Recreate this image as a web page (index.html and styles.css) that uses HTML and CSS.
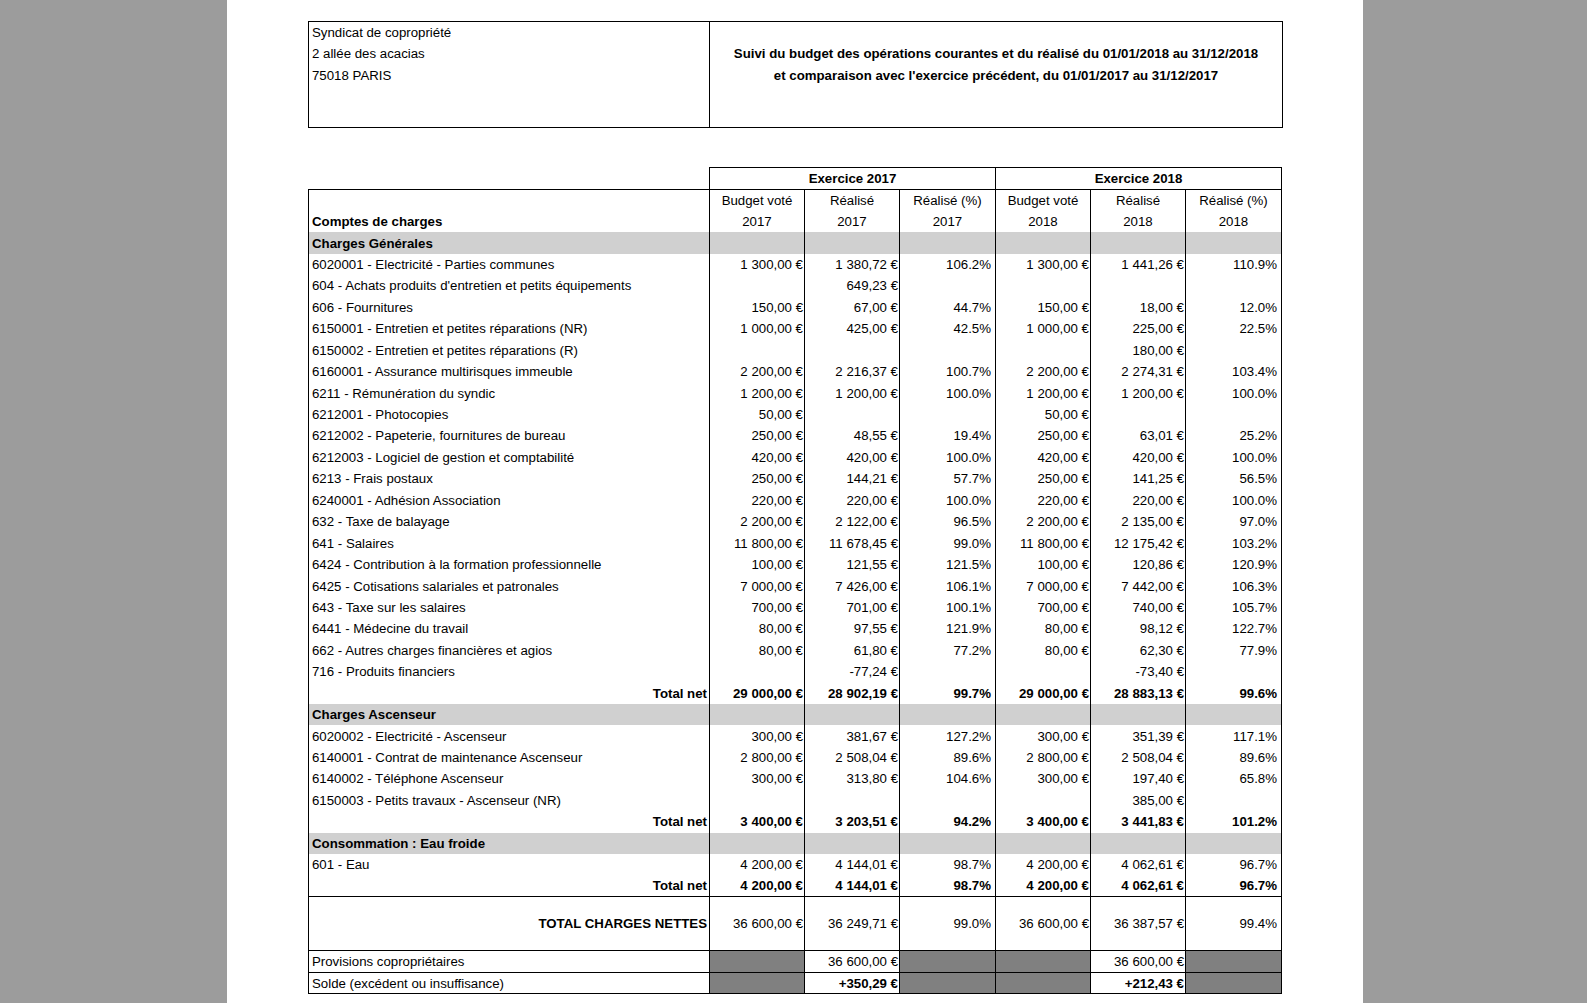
FILE: index.html
```html
<!DOCTYPE html>
<html lang="fr">
<head>
<meta charset="utf-8">
<title>Suivi du budget</title>
<link rel="stylesheet" href="styles.css">
</head>
<body>
<div class="page">
  <table class="head-box">
    <colgroup><col class="c-label"><col class="c-rest"></colgroup>
    <tr><td class="txt">Syndicat de copropriété</td><td class="divider"></td></tr>
    <tr><td class="txt">2 allée des acacias</td><td class="divider title">Suivi du budget des opérations courantes et du réalisé du 01/01/2018 au 31/12/2018</td></tr>
    <tr><td class="txt">75018 PARIS</td><td class="divider title">et comparaison avec l'exercice précédent, du 01/01/2017 au 31/12/2017</td></tr>
    <tr><td class="txt"></td><td class="divider"></td></tr>
    <tr><td class="txt"></td><td class="divider"></td></tr>
  </table>

  <table class="budget">
    <colgroup>
      <col class="c-label">
      <col class="c-95"><col class="c-95"><col class="c-96">
      <col class="c-95"><col class="c-95"><col class="c-96">
    </colgroup>
    <thead>
      <tr class="ex-row">
        <th class="blank"></th>
        <th colspan="3" class="ex">Exercice 2017</th>
        <th colspan="3" class="ex">Exercice 2018</th>
      </tr>
      <tr class="sub1">
        <th rowspan="2" class="comptes">Comptes de charges</th>
        <th>Budget voté</th><th>Réalisé</th><th>Réalisé (%)</th>
        <th>Budget voté</th><th>Réalisé</th><th>Réalisé (%)</th>
      </tr>
      <tr class="sub2">
        <th>2017</th><th>2017</th><th>2017</th>
        <th>2018</th><th>2018</th><th>2018</th>
      </tr>
    </thead>
    <tbody>
      <tr class="section"><td>Charges Générales</td><td></td><td></td><td></td><td></td><td></td><td></td></tr>
      <tr><td>6020001 - Electricité - Parties communes</td><td class="amt">1 300,00 €</td><td class="amt">1 380,72 €</td><td class="pct">106.2%</td><td class="amt">1 300,00 €</td><td class="amt">1 441,26 €</td><td class="pct">110.9%</td></tr>
      <tr><td>604 - Achats produits d'entretien et petits équipements</td><td class="amt"></td><td class="amt">649,23 €</td><td class="pct"></td><td class="amt"></td><td class="amt"></td><td class="pct"></td></tr>
      <tr><td>606 - Fournitures</td><td class="amt">150,00 €</td><td class="amt">67,00 €</td><td class="pct">44.7%</td><td class="amt">150,00 €</td><td class="amt">18,00 €</td><td class="pct">12.0%</td></tr>
      <tr><td>6150001 - Entretien et petites réparations (NR)</td><td class="amt">1 000,00 €</td><td class="amt">425,00 €</td><td class="pct">42.5%</td><td class="amt">1 000,00 €</td><td class="amt">225,00 €</td><td class="pct">22.5%</td></tr>
      <tr><td>6150002 - Entretien et petites réparations (R)</td><td class="amt"></td><td class="amt"></td><td class="pct"></td><td class="amt"></td><td class="amt">180,00 €</td><td class="pct"></td></tr>
      <tr><td>6160001 - Assurance multirisques immeuble</td><td class="amt">2 200,00 €</td><td class="amt">2 216,37 €</td><td class="pct">100.7%</td><td class="amt">2 200,00 €</td><td class="amt">2 274,31 €</td><td class="pct">103.4%</td></tr>
      <tr><td>6211 - Rémunération du syndic</td><td class="amt">1 200,00 €</td><td class="amt">1 200,00 €</td><td class="pct">100.0%</td><td class="amt">1 200,00 €</td><td class="amt">1 200,00 €</td><td class="pct">100.0%</td></tr>
      <tr><td>6212001 - Photocopies</td><td class="amt">50,00 €</td><td class="amt"></td><td class="pct"></td><td class="amt">50,00 €</td><td class="amt"></td><td class="pct"></td></tr>
      <tr><td>6212002 - Papeterie, fournitures de bureau</td><td class="amt">250,00 €</td><td class="amt">48,55 €</td><td class="pct">19.4%</td><td class="amt">250,00 €</td><td class="amt">63,01 €</td><td class="pct">25.2%</td></tr>
      <tr><td>6212003 - Logiciel de gestion et comptabilité</td><td class="amt">420,00 €</td><td class="amt">420,00 €</td><td class="pct">100.0%</td><td class="amt">420,00 €</td><td class="amt">420,00 €</td><td class="pct">100.0%</td></tr>
      <tr><td>6213 - Frais postaux</td><td class="amt">250,00 €</td><td class="amt">144,21 €</td><td class="pct">57.7%</td><td class="amt">250,00 €</td><td class="amt">141,25 €</td><td class="pct">56.5%</td></tr>
      <tr><td>6240001 - Adhésion Association</td><td class="amt">220,00 €</td><td class="amt">220,00 €</td><td class="pct">100.0%</td><td class="amt">220,00 €</td><td class="amt">220,00 €</td><td class="pct">100.0%</td></tr>
      <tr><td>632 - Taxe de balayage</td><td class="amt">2 200,00 €</td><td class="amt">2 122,00 €</td><td class="pct">96.5%</td><td class="amt">2 200,00 €</td><td class="amt">2 135,00 €</td><td class="pct">97.0%</td></tr>
      <tr><td>641 - Salaires</td><td class="amt">11 800,00 €</td><td class="amt">11 678,45 €</td><td class="pct">99.0%</td><td class="amt">11 800,00 €</td><td class="amt">12 175,42 €</td><td class="pct">103.2%</td></tr>
      <tr><td>6424 - Contribution à la formation professionnelle</td><td class="amt">100,00 €</td><td class="amt">121,55 €</td><td class="pct">121.5%</td><td class="amt">100,00 €</td><td class="amt">120,86 €</td><td class="pct">120.9%</td></tr>
      <tr><td>6425 - Cotisations salariales et patronales</td><td class="amt">7 000,00 €</td><td class="amt">7 426,00 €</td><td class="pct">106.1%</td><td class="amt">7 000,00 €</td><td class="amt">7 442,00 €</td><td class="pct">106.3%</td></tr>
      <tr><td>643 - Taxe sur les salaires</td><td class="amt">700,00 €</td><td class="amt">701,00 €</td><td class="pct">100.1%</td><td class="amt">700,00 €</td><td class="amt">740,00 €</td><td class="pct">105.7%</td></tr>
      <tr><td>6441 - Médecine du travail</td><td class="amt">80,00 €</td><td class="amt">97,55 €</td><td class="pct">121.9%</td><td class="amt">80,00 €</td><td class="amt">98,12 €</td><td class="pct">122.7%</td></tr>
      <tr><td>662 - Autres charges financières et agios</td><td class="amt">80,00 €</td><td class="amt">61,80 €</td><td class="pct">77.2%</td><td class="amt">80,00 €</td><td class="amt">62,30 €</td><td class="pct">77.9%</td></tr>
      <tr><td>716 - Produits financiers</td><td class="amt"></td><td class="amt">-77,24 €</td><td class="pct"></td><td class="amt"></td><td class="amt">-73,40 €</td><td class="pct"></td></tr>
      <tr class="total"><td class="tlabel">Total net</td><td class="amt">29 000,00 €</td><td class="amt">28 902,19 €</td><td class="pct">99.7%</td><td class="amt">29 000,00 €</td><td class="amt">28 883,13 €</td><td class="pct">99.6%</td></tr>

      <tr class="section"><td>Charges Ascenseur</td><td></td><td></td><td></td><td></td><td></td><td></td></tr>
      <tr><td>6020002 - Electricité - Ascenseur</td><td class="amt">300,00 €</td><td class="amt">381,67 €</td><td class="pct">127.2%</td><td class="amt">300,00 €</td><td class="amt">351,39 €</td><td class="pct">117.1%</td></tr>
      <tr><td>6140001 - Contrat de maintenance Ascenseur</td><td class="amt">2 800,00 €</td><td class="amt">2 508,04 €</td><td class="pct">89.6%</td><td class="amt">2 800,00 €</td><td class="amt">2 508,04 €</td><td class="pct">89.6%</td></tr>
      <tr><td>6140002 - Téléphone Ascenseur</td><td class="amt">300,00 €</td><td class="amt">313,80 €</td><td class="pct">104.6%</td><td class="amt">300,00 €</td><td class="amt">197,40 €</td><td class="pct">65.8%</td></tr>
      <tr><td>6150003 - Petits travaux - Ascenseur (NR)</td><td class="amt"></td><td class="amt"></td><td class="pct"></td><td class="amt"></td><td class="amt">385,00 €</td><td class="pct"></td></tr>
      <tr class="total"><td class="tlabel">Total net</td><td class="amt">3 400,00 €</td><td class="amt">3 203,51 €</td><td class="pct">94.2%</td><td class="amt">3 400,00 €</td><td class="amt">3 441,83 €</td><td class="pct">101.2%</td></tr>

      <tr class="section"><td>Consommation : Eau froide</td><td></td><td></td><td></td><td></td><td></td><td></td></tr>
      <tr><td>601 - Eau</td><td class="amt">4 200,00 €</td><td class="amt">4 144,01 €</td><td class="pct">98.7%</td><td class="amt">4 200,00 €</td><td class="amt">4 062,61 €</td><td class="pct">96.7%</td></tr>
      <tr class="total ruled"><td class="tlabel">Total net</td><td class="amt">4 200,00 €</td><td class="amt">4 144,01 €</td><td class="pct">98.7%</td><td class="amt">4 200,00 €</td><td class="amt">4 062,61 €</td><td class="pct">96.7%</td></tr>

      <tr class="grand ruled"><td class="tlabel">TOTAL CHARGES NETTES</td><td class="amt">36 600,00 €</td><td class="amt">36 249,71 €</td><td class="pct">99.0%</td><td class="amt">36 600,00 €</td><td class="amt">36 387,57 €</td><td class="pct">99.4%</td></tr>
      <tr class="ruled"><td>Provisions copropriétaires</td><td class="dark"></td><td class="amt">36 600,00 €</td><td class="dark"></td><td class="dark"></td><td class="amt">36 600,00 €</td><td class="dark"></td></tr>
      <tr class="ruled"><td>Solde (excédent ou insuffisance)</td><td class="dark"></td><td class="amt strong">+350,29 €</td><td class="dark"></td><td class="dark"></td><td class="amt strong">+212,43 €</td><td class="dark"></td></tr>
    </tbody>
  </table>
</div>
</body>
</html>
```

FILE: styles.css
```css
html, body {
  margin: 0;
  padding: 0;
}

body {
  background: #9c9c9c;
  font-family: "Liberation Sans", Arial, sans-serif;
  font-size: 13.25px;
  color: #000;
}

.page {
  width: 1136px;
  min-height: 1003px;
  margin-left: 227px;
  background: #fff;
  padding-top: 21px;
  padding-left: 81px;
  box-sizing: border-box;
}

table {
  border-collapse: collapse;
  table-layout: fixed;
  width: 974px;
}

td, th {
  padding: 0;
  white-space: nowrap;
  overflow: hidden;
  line-height: 15px;
}

.c-label { width: 401px; }
.c-rest { width: 573px; }
.c-95 { width: 95px; }
.c-96 { width: 96px; }

/* ---------- header box ---------- */
.head-box {
  border: 1px solid #000;
}

.head-box tr {
  height: 21.3px;
}

.head-box .txt {
  padding-left: 3px;
  padding-top: 1px;
  vertical-align: middle;
}

.head-box .divider {
  border-left: 1px solid #000;
}

.head-box .title {
  font-weight: bold;
  text-align: center;
  vertical-align: middle;
  padding-top: 1px;
}

/* ---------- budget table ---------- */
.budget {
  margin-top: 39px;
}

.budget tr {
  height: 21.45px;
}

.budget th {
  font-weight: normal;
  text-align: center;
  vertical-align: middle;
  border-left: 1px solid #000;
  border-right: 1px solid #000;
}

.budget .ex-row th.ex {
  font-weight: bold;
  border-top: 1px solid #000;
  border-bottom: 1px solid #000;
}

.budget .ex-row th.blank {
  border: none;
  border-bottom: 1px solid #000;
}

.budget th.comptes {
  font-weight: bold;
  text-align: left;
  vertical-align: bottom;
  padding-left: 3px;
  padding-bottom: 3px;
}

.budget td {
  border-left: 1px solid #000;
  border-right: 1px solid #000;
  vertical-align: middle;
}

.budget td:first-child {
  padding-left: 3px;
}

.budget td.amt {
  text-align: right;
  padding-right: 1px;
}

.budget td.pct {
  text-align: right;
  padding-right: 4px;
}

.budget tr.section td {
  background: #d0d0d0;
  font-weight: bold;
}

.budget tr.total td {
  font-weight: bold;
}

.budget td.tlabel {
  text-align: right;
  padding-right: 2px;
  font-weight: bold;
}

.budget tr.ruled td {
  border-bottom: 1px solid #000;
}

.budget tr.grand {
  height: 54px;
}

.budget td.dark {
  background: #808080;
}

.budget td.strong {
  font-weight: bold;
}
```
